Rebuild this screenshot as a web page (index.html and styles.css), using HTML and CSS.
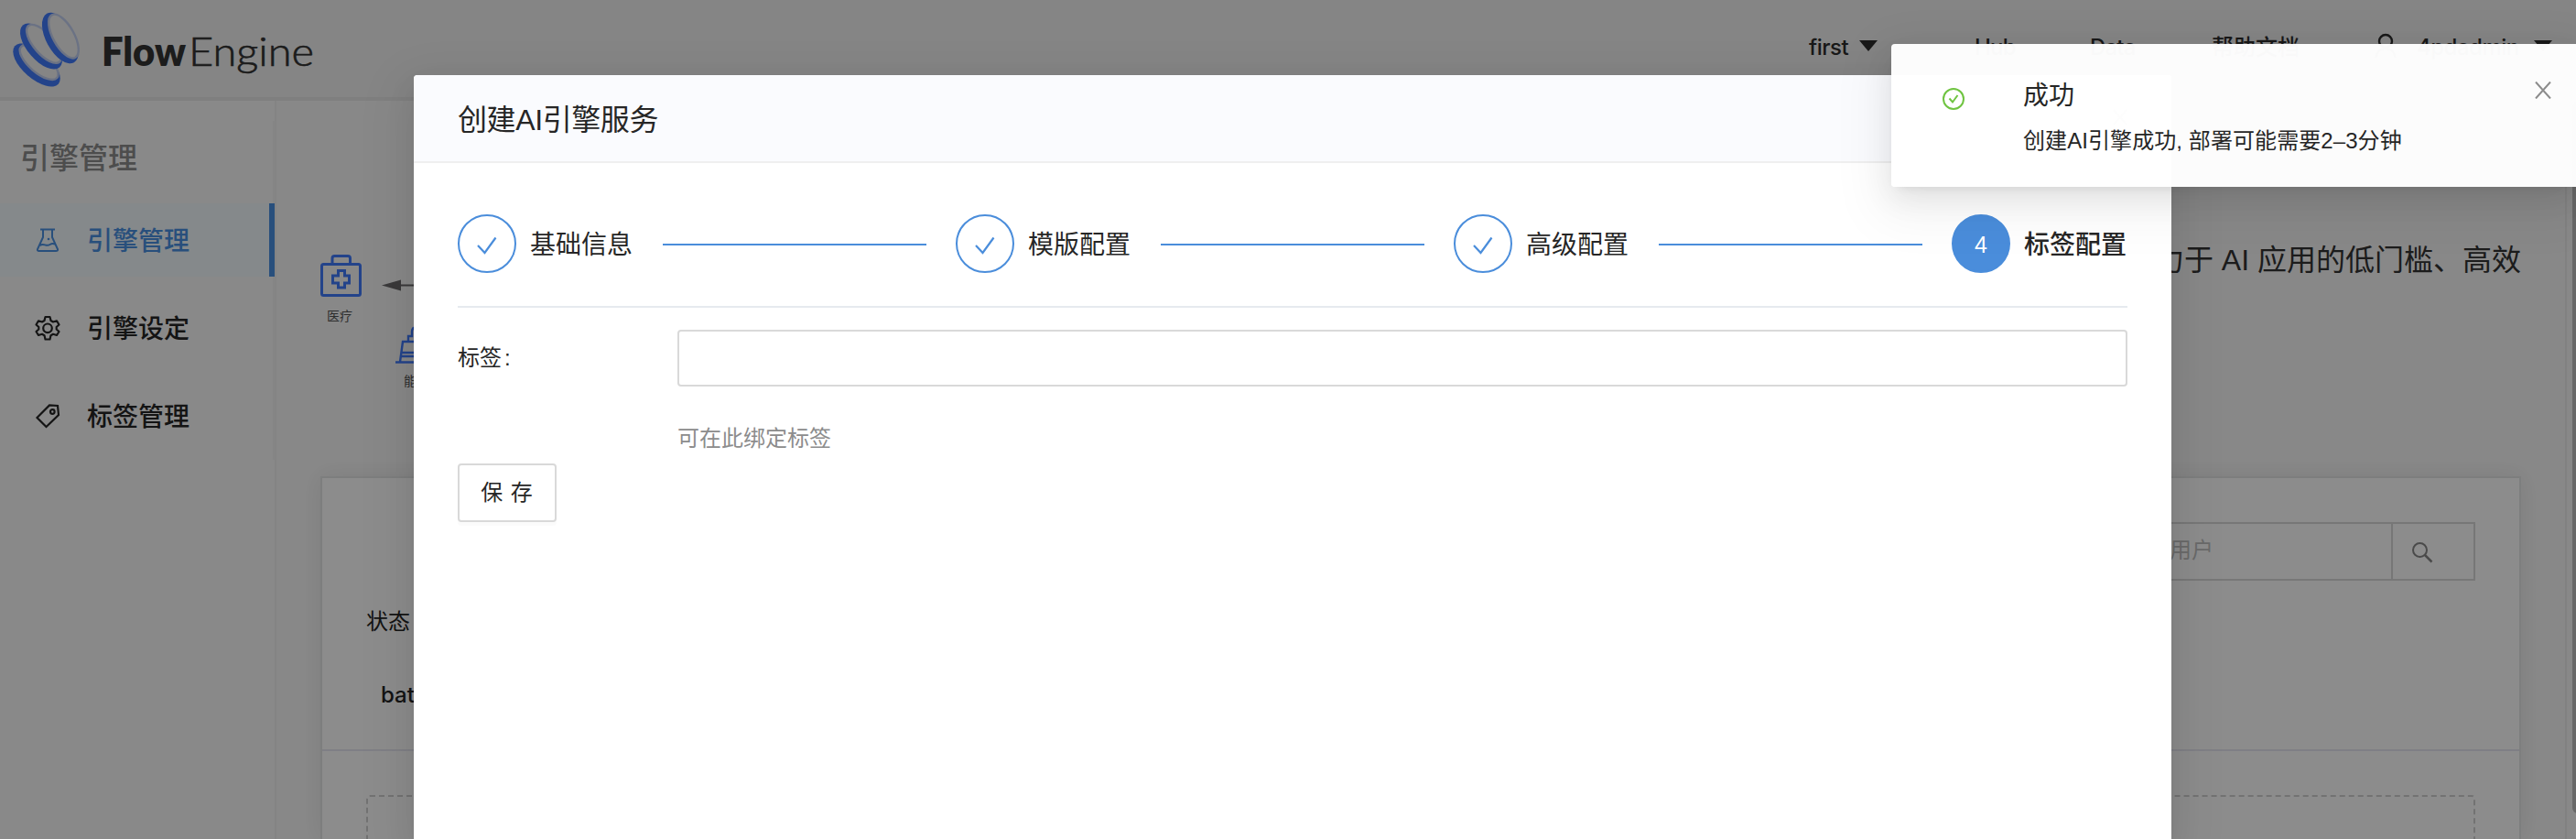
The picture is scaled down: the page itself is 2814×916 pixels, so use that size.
FILE: index.html
```html
<!DOCTYPE html>
<html lang="zh-CN">
<head>
<meta charset="utf-8">
<title>FlowEngine</title>
<link rel="stylesheet" href="styles.css">
</head>
<body>
<div class="app">
  <header class="topbar">
    <svg class="logo" width="350" height="100" viewBox="0 0 350 100">
      <g transform="translate(40 71) rotate(41)">
        <ellipse class="ring" rx="31.500" ry="15"/>
        <ellipse class="hole" cy="-4" rx="26" ry="11"/>
      </g>
      <g transform="translate(45 50.500) rotate(49)">
        <ellipse class="ring" rx="30.500" ry="15"/>
        <ellipse class="hole" cy="-4" rx="26" ry="11"/>
      </g>
      <g transform="translate(66 41.500) rotate(61)">
        <ellipse class="ring" rx="30.500" ry="15.500"/>
        <ellipse class="hole" cy="-4" rx="26.500" ry="11.500"/>
      </g>
      <text class="logo-bold" x="111" y="72" textLength="92" lengthAdjust="spacingAndGlyphs">Flow</text>
      <text class="logo-thin" x="206" y="72" textLength="137" lengthAdjust="spacingAndGlyphs">Engine</text>
    </svg>
    <nav class="topnav">
      <span class="nav-item nav-first">first<i class="caret"></i></span>
      <span class="nav-item nav-hub">Hub</span>
      <span class="nav-item nav-data">Data</span>
      <span class="nav-item nav-docs">帮助文档</span>
      <span class="nav-item nav-user"><svg width="24" height="28" viewBox="0 0 24 28" fill="none" stroke="currentColor" stroke-width="2.400"><circle cx="12" cy="9" r="7"/><path d="M1.500 27C2 21 6 17 12 17S22 21 22.500 27"/></svg><b class="user-name">4pdadmin</b><i class="caret"></i></span>
    </nav>
  </header>
  <div class="body">
    <aside class="sidebar">
      <div class="menu">
        <h2 class="menu-title">引擎管理</h2>
        <div class="menu-item active">
          <svg width="28" height="28" viewBox="0 0 28 28" fill="none" stroke="currentColor" stroke-width="2"><path d="M6 2.500H22M9 3V11L3 24Q2.500 26 4.500 26H23Q25.500 26 25 24L19 11V3M5.500 20C10 16.500 12 22 16.500 19Q19 17.500 22 18.500"/><circle cx="15" cy="13" r="1.300" fill="currentColor" stroke="none"/></svg>
          <span>引擎管理</span>
        </div>
        <div class="menu-item">
          <svg width="28" height="28" viewBox="0 0 28 28" fill="none" stroke="currentColor" stroke-width="2.200" stroke-linejoin="round"><path d="M11.500 2H16.500L17.500 6L20 7.500L24 6.300L26.500 10.500L23.700 13V15.500L26.500 18L24 22L20 20.800L17.500 22.300L16.500 26.500H11.500L10.500 22.300L8 20.800L4 22L1.500 18L4.300 15.500V13L1.500 10.500L4 6.300L8 7.500L10.500 6z"/><circle cx="14" cy="14.300" r="4.800"/></svg>
          <span>引擎设定</span>
        </div>
        <div class="menu-item">
          <svg width="28" height="28" viewBox="0 0 28 28" fill="none" stroke="currentColor" stroke-width="2.200"><path d="M2.500 16L16 2.500L25 3L26 13L12.500 26z"/><circle cx="19.300" cy="9.500" r="2.300"/></svg>
          <span>标签管理</span>
        </div>
      </div>
    </aside>
    <main class="content">
      <section class="hero">
        <svg class="hero-art" width="400" height="190" viewBox="0 0 400 190">
          <g fill="none" stroke="#417afb" stroke-width="3">
            <rect x="1.500" y="30.500" width="42" height="34" rx="2"/>
            <path d="M13 30V24Q13 21.500 15.500 21.500H30Q32.500 21.500 32.500 24V30M19.500 37.500H26.500V43H31.500V51H26.500V56H19.500V51H13.500V43H19.500z"/>
            <path stroke-width="2.400" d="M82 137.500H135M87 137L90 115H130L133 137M96 115V109H100V104Q100 99 106 99M89 127H131M88.500 131H131"/>
          </g>
          <path d="M67 53.500L88 47.500V59.500z" fill="#6a696b"/>
          <path d="M86 53.500H180" stroke="#6a696b" stroke-width="2"/>
          <text class="art-text" x="7" y="92">医疗</text>
          <text class="art-text" x="91" y="163">能源</text>
        </svg>
        <p class="tagline">致力于 AI 应用的低门槛、高效</p>
      </section>
      <section class="card">
        <div class="filter">
          <div class="search">
            <span class="search-input">请输入名称或用户</span>
            <span class="search-btn"><svg width="24" height="24" viewBox="0 0 24 24" fill="none" stroke="currentColor" stroke-width="2"><circle cx="9.500" cy="9.500" r="7.500"/><path stroke-width="2.500" d="M15 15L22.500 22.500"/></svg></span>
          </div>
          <div class="status">状态</div>
          <div class="type">batch</div>
        </div>
        <div class="dropzone"></div>
      </section>
    </main>
    <div class="gutter"><i class="thumb"></i></div>
  </div>
</div>

<div class="mask"></div>

<div class="modal">
  <div class="modal-head">
    <span>创建AI引擎服务</span>
    <svg width="16" height="18" viewBox="0 0 16 18" stroke="#999" stroke-width="2"><path d="M1 1L15 17M15 1L1 17"/></svg>
  </div>
  <div class="modal-body">
    <div class="steps">
      <div class="step"><i class="dot"><svg width="24" height="20" viewBox="0 0 24 20"><path d="M2 10L9.500 18L21.500 1.500"/></svg></i><span>基础信息</span><i class="line"></i></div>
      <div class="step"><i class="dot"><svg width="24" height="20" viewBox="0 0 24 20"><path d="M2 10L9.500 18L21.500 1.500"/></svg></i><span>模版配置</span><i class="line"></i></div>
      <div class="step"><i class="dot"><svg width="24" height="20" viewBox="0 0 24 20"><path d="M2 10L9.500 18L21.500 1.500"/></svg></i><span>高级配置</span><i class="line"></i></div>
      <div class="step current"><i class="dot">4</i><span>标签配置</span></div>
    </div>
    <div class="field">
      <label>标签<span class="colon">:</span></label>
      <div class="control"><div class="input"></div><p class="help">可在此绑定标签</p></div>
    </div>
    <button class="save">保 存</button>
  </div>
</div>

<div class="toast">
  <svg class="toast-icon" width="24" height="24" viewBox="0 0 24 24" fill="none" stroke="#6fc441" stroke-width="2"><circle cx="12" cy="12" r="11"/><path d="M7.500 11.500L11 15.500L16.500 8"/></svg>
  <div class="toast-text">
    <div class="toast-title">成功</div>
    <div class="toast-desc">创建AI引擎成功, 部署可能需要2–3分钟</div>
  </div>
  <svg class="toast-close" width="18" height="19" viewBox="0 0 18 19" stroke="#8c8c8c" stroke-width="2"><path d="M1 0.500L17 18.500M17 0.500L1 18.500"/></svg>
</div>
</body>
</html>
```

FILE: styles.css
```css
* { box-sizing: border-box; }
html { height: 916px; overflow: hidden; }
body {
  margin: 0;
  width: 2814px;
  height: 916px;
  overflow: hidden;
  position: relative;
  font-family: "Liberation Sans", "Noto Sans CJK SC", sans-serif;
  font-size: 24px;
  color: #262626;
}
i { font-style: normal; }
svg { display: block; flex: none; }
.app { display: flex; flex-direction: column; height: 916px; overflow: hidden; background: #f8f8f8; }

/* top bar */
.topbar {
  display: flex;
  justify-content: space-between;
  height: 110px;
  background: #f2f2f2;
  border-bottom: 4px solid #e7e7e7;
  flex: none;
}
.ring { fill: #417afb; }
.hole { fill: #f2f2f2; stroke: #c3d0f0; stroke-width: 2.4; }
.logo text { font-family: Lato, sans-serif; font-size: 43px; fill: #333; }
.logo .logo-bold { font-weight: 800; }
.logo .logo-thin { font-weight: 300; stroke: #333; stroke-width: .6px; }
.topnav { display: flex; height: 36px; margin-top: 34px; padding-right: 26px; }
.nav-item {
  display: flex;
  align-items: center;
  white-space: nowrap;
  font: 500 24px/36px Inter, "Noto Sans CJK SC", sans-serif;
  color: #2e2e2e;
}
.nav-first { width: 181px; letter-spacing: -0.5px; }
.nav-hub { width: 126px; letter-spacing: -0.8px; }
.nav-data { width: 133px; letter-spacing: -0.8px; }
.nav-docs { width: 178px; }
.caret {
  border: 10px solid transparent;
  border-top: 12px solid #2e2e2e;
  border-bottom: 0;
  margin: 0 0 4px 12px;
}
.nav-user svg { margin: -4px 22px 0 0; }
.user-name { font-weight: 500; width: 116px; letter-spacing: -0.5px; }

/* side menu */
.body { display: flex; flex: 1; min-height: 0; }
.sidebar { width: 302px; flex: none; border-right: 2px solid #f0f0f0; padding-top: 22px; background: #fafafa; }
.menu { height: 370px; border-right: 2px solid #f2f2f2; }
.menu-title { margin: 0; padding: 17px 0 0 22px; height: 90px; font-size: 32px; line-height: 48px; font-weight: 500; color: #8c8c8c; }
.menu-item {
  display: flex;
  align-items: center;
  gap: 29px;
  height: 80px;
  margin: 0 -2px 16px 0;
  padding-left: 38px;
  font-size: 28px;
  font-weight: 500;
}
.menu-item span { padding-bottom: 3px; }
.menu-item.active { color: #4a90e2; background: #f2fafe; border-right: 6px solid #4a90e2; }

/* page content */
.content { flex: 1; padding: 0 48px; min-width: 0; }
.hero { height: 410px; display: flex; justify-content: space-between; padding-top: 148px; }
.art-text { font-size: 14px; fill: #555; }
.tagline { margin: 2px 0 0; font-size: 32px; line-height: 48px; color: #333; white-space: nowrap; }
.card { height: 396px; border: 2px solid #e4e6e6; border-bottom: 0; overflow: hidden; background: #fff; box-shadow: 0 0 24px rgba(0, 30, 20, .08); }
.filter { height: 298px; border-bottom: 2px solid #e8e8f2; padding: 48px 48px 0; }
.search { display: flex; margin-left: auto; width: 560px; height: 64px; border: 2px solid #d9d9d9; }
.search-input { flex: 1; min-width: 0; line-height: 58px; color: #bfbfbf; text-align: right; padding-right: 194px; white-space: nowrap; }
.search-btn { flex: none; width: 90px; border-left: 2px solid #d9d9d9; padding: 19px 0 0 20px; color: #888; }
.status { margin-top: 27px; line-height: 36px; }
.type { margin: 44px 0 0 16px; line-height: 36px; font-family: Inter, sans-serif; font-weight: 500; }
.dropzone { margin: 48px 48px 0; height: 200px; border: 2px dashed #d0d0d0; border-radius: 4px; }
.gutter { width: 12px; border-left: 2px solid #ebebeb; flex: none; padding-left: 6px; overflow: hidden; }
.thumb { display: block; height: 778px; width: 12px; border-radius: 6px; background: #bdbdbd; }

.mask { position: absolute; inset: 0; background: rgba(0, 0, 0, .45); }

/* dialog */
.modal {
  position: absolute;
  left: 452px;
  top: 82px;
  width: 1920px;
  height: 834px;
  background: #fff;
  border-radius: 4px 4px 0 0;
  box-shadow: 0 6px 12px -8px rgba(0, 0, 0, .12), 0 12px 32px rgba(0, 0, 0, .08), 0 18px 56px 16px rgba(0, 0, 0, .05);
}
.modal-head {
  display: flex;
  align-items: center;
  justify-content: space-between;
  height: 96px;
  padding: 0 48px 2px;
  font-size: 32px;
  letter-spacing: -0.4px;
  background: #fafbfe;
  border-bottom: 2px solid #efefef;
  border-radius: 4px 4px 0 0;
}
.modal-body { padding: 56px 48px; }
.steps { display: flex; height: 102px; border-bottom: 2px solid #e6eaef; }
.step { display: flex; width: 544px; height: 64px; align-items: center; font-size: 28px; }
.step.current { width: 192px; font-weight: 500; }
.step span { margin-left: 15px; width: 113px; padding-bottom: 3px; white-space: nowrap; }
.dot {
  display: flex;
  align-items: center;
  justify-content: center;
  width: 64px;
  height: 64px;
  flex: none;
  border: 2px solid #4a8ddb;
  border-radius: 50%;
}
.dot svg { fill: none; stroke: #4a8ddb; stroke-width: 2.2; margin-top: 3px; }
.current .dot { background: #4a8ddb; color: #fff; font-size: 25px; font-weight: 400; padding-top: 2px; }
.line { width: 288px; height: 2px; background: #4a8ddb; margin: 2px 0 0 32px; }
.field { display: flex; margin-top: 24px; }
.field label { width: 240px; line-height: 62px; }
.colon { margin-left: 3px; }
.control { flex: 1; }
.input { height: 62px; border: 2px solid #d9d9d9; border-radius: 4px; }
.help { margin: 39px 0 0; line-height: 36px; color: #8c8c8c; }
.save {
  display: block;
  width: 108px;
  height: 64px;
  margin-top: 9px;
  padding: 0 1px 5px 0;
  font: 24px "Liberation Sans", "Noto Sans CJK SC", sans-serif;
  word-spacing: 2px;
  color: #262626;
  background: #fff;
  border: 2px solid #d9d9d9;
  border-radius: 4px;
  box-shadow: 0 4px 0 rgba(0, 0, 0, .016);
}

/* notification */
.toast {
  position: absolute;
  left: 2066px;
  top: 48px;
  width: 748px;
  height: 156px;
  display: flex;
  padding: 36px 27px 0 56px;
  background: rgba(255, 255, 255, .975);
  border-radius: 4px 0 0 4px;
  box-shadow: 0 6px 12px -8px rgba(0, 0, 0, .12), 0 12px 32px rgba(0, 0, 0, .08), 0 18px 56px 16px rgba(0, 0, 0, .05);
}
.toast-icon { margin-top: 12px; }
.toast-text { flex: 1; margin-left: 64px; white-space: nowrap; }
.toast-title { font-size: 28px; line-height: 40px; padding-top: 1px; }
.toast-desc { margin-top: 11px; line-height: 36px; letter-spacing: .08px; }
.toast-close { margin-top: 5px; }
```
